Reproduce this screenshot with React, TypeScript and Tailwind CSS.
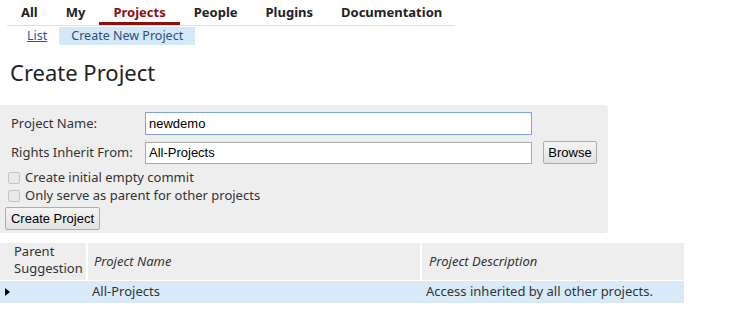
import React from "react";

const ui = { fontFamily: '"Noto Sans", "Open Sans", sans-serif' };
const arial = { fontFamily: '"Liberation Sans", Arial, sans-serif' };

const tabs = ["All", "My", "Projects", "People", "Plugins", "Documentation"];

function Checkbox({ label }: { label: string }) {
  return (
    <label className="flex h-[18px] items-center gap-[5px] pl-[8px] text-[13px] text-[#333]">
      <span className="h-[12px] w-[12px] rounded-[2px] border border-[#c4c4c4] bg-[#e9e9e9]" />
      {label}
    </label>
  );
}

export default function App() {
  return (
    <div className="h-[322px] w-[749px] overflow-hidden bg-white text-[#222]" style={ui}>
      {/* top menu */}
      <div className="ml-[7px] flex h-[26px] w-[448px] border-b border-[#e0e0e0]">
        {tabs.map((t) => (
          <div
            key={t}
            className={`flex h-[25px] items-start px-[14px] pt-[4px] text-[13px] leading-[16px] font-bold ${
              t === "Projects" ? "border-b-[3px] border-[#8b0f0f] text-[#8b0f0f]" : "text-[#222]"
            }`}
          >
            {t}
          </div>
        ))}
      </div>
      <div className="ml-[27px] mt-[2px] flex h-[16px] items-center gap-[12px] text-[12.5px]">
        <a className="text-[#2356a0] underline">List</a>
        <span className="bg-[#d4e8f7] px-[12px] text-[#2d4f80]">Create New Project</span>
      </div>

      <h1 className="ml-[10px] mt-[14px] text-[22px] leading-[28px] font-normal text-[#222]">
        Create Project
      </h1>

      {/* form */}
      <div className="mt-[19px] h-[128px] w-[608px] rounded-r-[3px] bg-[#eeeeee] pt-[7px]">
        <div className="flex h-[23px] items-center">
          <span className="w-[145px] pl-[11px] text-[13px] text-[#333]">Project Name:</span>
          <div
            className="flex h-[23px] w-[387px] items-center border border-[#7ea3db] bg-white px-[3px] text-[13px] text-black"
            style={arial}
          >
            newdemo
          </div>
        </div>
        <div className="mt-[6px] flex h-[23px] items-center">
          <span className="w-[145px] pl-[11px] text-[13px] text-[#333]">Rights Inherit From:</span>
          <div
            className="flex h-[22px] w-[387px] items-center border border-[#a9a9a9] bg-white px-[3px] text-[13px] text-black"
            style={arial}
          >
            All-Projects
          </div>
          <button
            className="ml-[11px] h-[23px] w-[54px] rounded-[2px] border border-[#acacac] bg-gradient-to-b from-[#f4f4f4] to-[#e2e2e2] text-[13px] text-black"
            style={arial}
          >
            Browse
          </button>
        </div>
        <div className="mt-[5px]">
          <Checkbox label="Create initial empty commit" />
          <Checkbox label="Only serve as parent for other projects" />
        </div>
        <button
          className="ml-[5px] h-[23px] w-[95px] rounded-[2px] border border-[#acacac] bg-gradient-to-b from-[#f4f4f4] to-[#e2e2e2] text-[13px] text-black"
          style={arial}
        >
          Create Project
        </button>
      </div>

      {/* suggestions table */}
      <div className="mt-[10px] w-[684px] text-[13px] text-[#333]">
        <div className="flex h-[37px] gap-[2px]">
          <div className="w-[86px] bg-[#eeeeee] pl-[14px] leading-[17px]">
            Parent
            <br />
            Suggestion
          </div>
          <div className="flex w-[332px] items-center bg-[#eeeeee] pl-[6px] italic">Project Name</div>
          <div className="flex flex-1 items-center bg-[#eeeeee] pl-[7px] italic">Project Description</div>
        </div>
        <div className="mt-[1px] flex h-[22px] items-center bg-[#d8eaf8]">
          <div className="w-[92px] pl-[5px]">
            <span className="block h-0 w-0 border-y-[4px] border-l-[5px] border-y-transparent border-l-black" />
          </div>
          <div className="w-[334px]">All-Projects</div>
          <div>Access inherited by all other projects.</div>
        </div>
      </div>
    </div>
  );
}
